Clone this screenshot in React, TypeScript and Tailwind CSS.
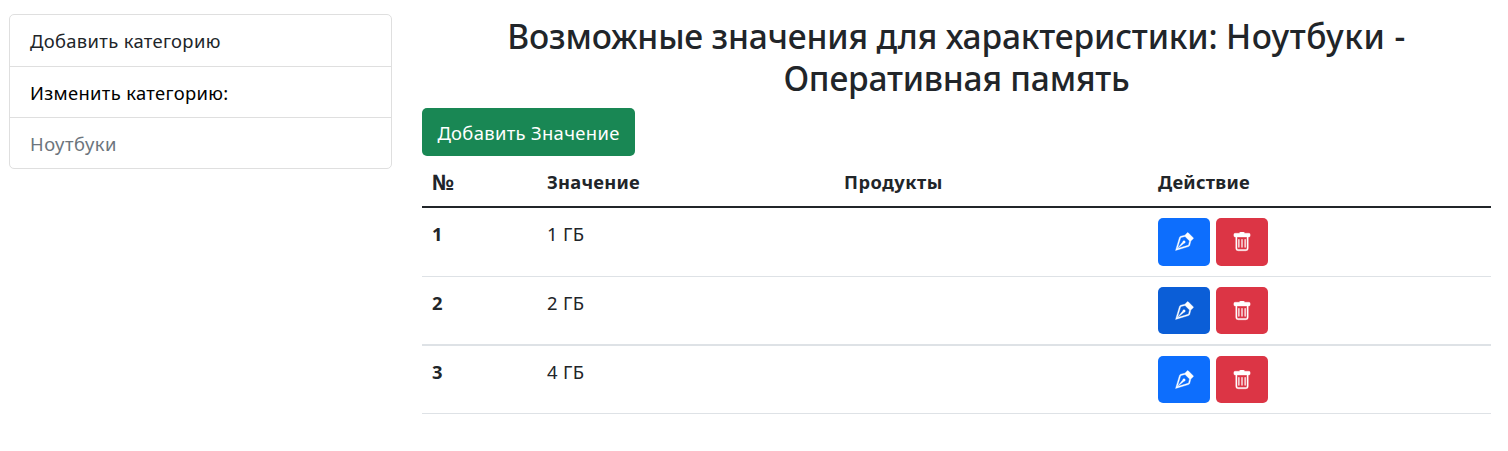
const rows = [
  { id: 1, value: "1 ГБ", edit: "bg-[#0d6efd]", height: "h-[69px] border-b", button: "h-12" },
  { id: 2, value: "2 ГБ", edit: "bg-[#0b5ed7]", height: "h-[69px] border-b-2", button: "h-[47px]" },
  { id: 3, value: "4 ГБ", edit: "bg-[#0d6efd]", height: "h-[68px] border-b", button: "h-[47px]" },
];

function PenIcon() {
  return (
    <svg width="20" height="20" viewBox="0 0 16 16" fill="currentColor" stroke="currentColor" strokeWidth="0.3">
      <path fillRule="evenodd" d="M10.646.646a.5.5 0 0 1 .708 0l4 4a.5.5 0 0 1 0 .708l-1.902 1.902-.829 3.313a1.5 1.5 0 0 1-1.024 1.073L1.254 14.746 4.358 4.4A1.5 1.5 0 0 1 5.43 3.377l3.313-.828L10.646.646zm-1.8 2.908-3.173.793a.5.5 0 0 0-.358.342l-2.57 8.565 8.567-2.57a.5.5 0 0 0 .34-.357l.794-3.174-3.6-3.6z" />
      <path fillRule="evenodd" d="M2.832 13.228 8 9a1 1 0 1 0-1-1l-4.228 5.168-.026.086.086-.026z" />
    </svg>
  );
}

function TrashIcon() {
  return (
    <svg width="20" height="20" viewBox="0 0 16 16" fill="currentColor">
      <path d="M5.5 5.5A.5.5 0 0 1 6 6v6a.5.5 0 0 1-1 0V6a.5.5 0 0 1 .5-.5zm2.5 0a.5.5 0 0 1 .5.5v6a.5.5 0 0 1-1 0V6a.5.5 0 0 1 .5-.5zm3 .5a.5.5 0 0 0-1 0v6a.5.5 0 0 0 1 0V6z" />
      <path stroke="currentColor" strokeWidth="0.3" d="M14.5 3a1 1 0 0 1-1 1H13v9a2 2 0 0 1-2 2H5a2 2 0 0 1-2-2V4h-.5a1 1 0 0 1-1-1V2a1 1 0 0 1 1-1H6a1 1 0 0 1 1-1h2a1 1 0 0 1 1 1h3.5a1 1 0 0 1 1 1v1zM4.118 4 4 4.059V13a1 1 0 0 0 1 1h6a1 1 0 0 0 1-1V4.059L11.882 4H4.118z" />
    </svg>
  );
}

export default function App() {
  return (
    <div className="flex h-[451px] items-start overflow-hidden bg-white pl-[9px] font-['Noto_Sans','Open_Sans',sans-serif] text-[18.4px] tracking-[0.33px] text-[#212529]">
      <nav className="mt-[14px] w-[383px] rounded-[5px] border border-[#dfdfdf]">
        <div className="flex h-[52px] items-center border-b border-[#dfdfdf] pt-px pl-5"><span>Добавить категорию</span></div>
        <div className="flex h-[51px] items-center border-b border-[#dfdfdf] pt-px pl-5 text-black"><span>Изменить категорию:</span></div>
        <div className="flex h-[50px] items-center pt-0.5 pl-5 text-[#6c757d]"><span className="tracking-[0.5px]">Ноутбуки</span></div>
      </nav>
      <main className="ml-[30px] w-[1069px] pt-[15px]">
        <h1 className="h-[93px] text-center text-[33.5px] leading-[42px] font-medium tracking-normal">
          <span className="tracking-[-0.15px]">Возможные значения для характеристики: </span><span className="tracking-[0.55px]">Ноутбуки -</span><br /><span className="tracking-[-0.2px]">Оперативная память</span>
        </h1>
        <button className="flex h-12 w-[213px] items-center justify-center rounded-[5px] bg-[#198754] pt-0.5 text-white"><span>Добавить Значение</span></button>
        <div className="grid h-[52px] grid-cols-[115px_297px_314px_1fr] items-center border-b-2 border-[#212529] pt-0.5 pl-[10px] text-[18.3px] font-bold tracking-[0.25px]">
          <span className="text-[21.5px] leading-6">№</span><span>Значение</span><span className="tracking-[0.5px]">Продукты</span><span>Действие</span>
        </div>
        {rows.map((r) => (
          <div key={r.id} className={`grid grid-cols-[115px_297px_314px_1fr] border-[#dee2e6] pt-[10px] pl-[10px] leading-8 ${r.height}`}>
            <b>{r.id}</b><span>{r.value}</span><span />
            <div className="flex gap-[6px] text-white">
              <button className={`flex w-[52px] items-center justify-center rounded-[5px] ${r.button} ${r.edit}`}><PenIcon /></button>
              <button className={`flex w-[52px] items-center justify-center rounded-[5px] bg-[#dc3545] ${r.button}`}><TrashIcon /></button>
            </div>
          </div>
        ))}
      </main>
    </div>
  );
}
